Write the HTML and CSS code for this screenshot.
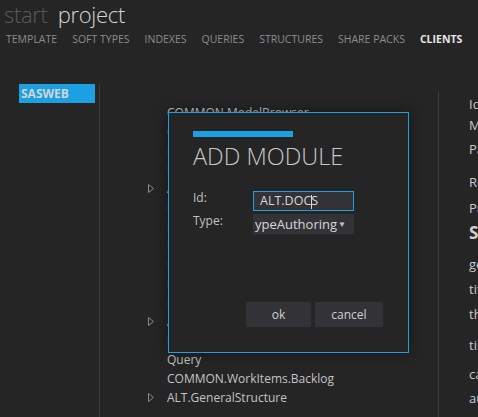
FILE: index.html
```html
<!DOCTYPE html>
<html lang="en">
<head>
  <meta charset="UTF-8">
  <title>project</title>
  <link rel="stylesheet" href="styles.css">
</head>
<body>
  <div class="title"><span class="start">start</span><span class="project">project</span></div>
  <div class="tabs">
    <span>TEMPLATE</span>
    <span>SOFT TYPES</span>
    <span>INDEXES</span>
    <span>QUERIES</span>
    <span>STRUCTURES</span>
    <span>SHARE PACKS</span>
    <span class="active">CLIENTS</span>
  </div>

  <div class="main">
    <div class="clients">
      <div class="client selected">SASWEB</div>
    </div>

    <div class="tree">
      <div class="row"><span class="arrow"></span>COMMON.ModelBrowser</div>
      <div class="row"><span class="arrow"></span>COMMON.Search</div>
      <div class="row"><span class="arrow"></span>Item</div>
      <div class="row"><span class="arrow"></span>Link</div>
      <div class="row"><span class="arrow"><svg width="6" height="9" viewBox="0 0 6 9"><polygon points="0.5,0.5 5.5,4.5 0.5,8.5" fill="none" stroke="#8a8a8a"/></svg></span>ALT.Documents</div>
      <div class="row"><span class="arrow"></span>Item</div>
      <div class="row"><span class="arrow"></span>Item</div>
      <div class="row"><span class="arrow"></span>Item</div>
      <div class="row"><span class="arrow"></span>Item</div>
      <div class="row"><span class="arrow"></span>Item</div>
      <div class="row"><span class="arrow"></span>Item</div>
      <div class="row"><span class="arrow"><svg width="6" height="9" viewBox="0 0 6 9"><polygon points="0.5,0.5 5.5,4.5 0.5,8.5" fill="none" stroke="#8a8a8a"/></svg></span>ALT.Workflow</div>
      <div class="row"><span class="arrow"></span>Item</div>
      <div class="row"><span class="arrow"></span>Query</div>
      <div class="row"><span class="arrow"></span>COMMON.WorkItems.Backlog</div>
      <div class="row"><span class="arrow"><svg width="6" height="9" viewBox="0 0 6 9"><polygon points="0.5,0.5 5.5,4.5 0.5,8.5" fill="none" stroke="#8a8a8a"/></svg></span>ALT.GeneralStructure</div>
    </div>

    <div class="props">
      <div class="prop">Id</div>
      <div class="prop">Module</div>
      <div class="prop gap">Path</div>
      <div class="prop gap2">Rename</div>
      <div class="prop gap3">Properties</div>
      <div class="heading">Settings</div>
      <div class="prop s1">general</div>
      <div class="prop s2">title</div>
      <div class="prop s2">theme</div>
      <div class="prop s3">timeout</div>
      <div class="prop s4">cache</div>
      <div class="prop s5">auth</div>
    </div>
  </div>

  <div class="dialog">
    <div class="bar"></div>
    <div class="dialog-title">ADD MODULE</div>
    <div class="form">
      <label>Id:</label>
      <div class="input">ALT.DOC<span class="caret"></span>S</div>
      <label>Type:</label>
      <div class="select"><span class="value">ypeAuthoring</span><span class="drop">&#9660;</span></div>
    </div>
    <div class="actions">
      <button class="ok">ok</button>
      <button class="cancel">cancel</button>
    </div>
  </div>
</body>
</html>
```

FILE: styles.css
```css
* {
  box-sizing: border-box;
}

body {
  margin: 0;
  width: 478px;
  height: 417px;
  overflow: hidden;
  background: #252526;
  color: #c8c8c8;
  font-family: 'Open Sans', 'Noto Sans', sans-serif;
  position: relative;
}

.title {
  height: 29px;
  padding-left: 4px;
  padding-top: 1px;
  font-size: 22px;
  line-height: 26px;
  font-weight: 300;
  letter-spacing: -0.3px;
  white-space: nowrap;
}

.start {
  color: #5a5a5a;
  margin-right: 10px;
}

.project {
  color: #d6d6d6;
}

.tabs {
  display: flex;
  gap: 15px;
  padding-left: 6px;
  font-size: 10.5px;
  line-height: 20px;
  color: #8c8c8c;
  white-space: nowrap;
}

.tabs .active {
  color: #e6e6e6;
  font-weight: bold;
}

.main {
  display: grid;
  grid-template-columns: 100px 338px 1fr;
  margin-top: 35px;
  height: 333px;
}

.clients {
  border-right: 1px solid #3c3c3c;
  padding-left: 19px;
}

.client {
  width: 76px;
  height: 19px;
  padding-left: 2px;
  font-size: 12px;
  line-height: 19px;
  font-weight: bold;
}

.client.selected {
  background: #1ba1e2;
  color: #d4d4d4;
}

.tree {
  padding-top: 19px;
  padding-left: 48px;
  font-size: 12px;
  white-space: nowrap;
  overflow: hidden;
}

.row {
  display: flex;
  align-items: center;
  height: 19px;
  line-height: 19px;
  color: #c4c4c4;
}

.arrow {
  width: 19px;
  display: flex;
  align-items: center;
}

.props {
  margin-top: 8px;
  border-left: 1px solid #3c3c3c;
  padding-left: 30px;
  padding-top: 2px;
  font-size: 13px;
  white-space: nowrap;
  overflow: hidden;
}

.prop {
  line-height: 20px;
  margin-bottom: 1px;
  color: #c8c8c8;
}

.prop.gap {
  margin-top: 4px;
}

.prop.gap2 {
  margin-top: 13px;
}

.prop.gap3 {
  margin-top: 6px;
}

.heading {
  margin-top: 4px;
  font-size: 17px;
  font-weight: bold;
  line-height: 22px;
  color: #d0d0d0;
}

.prop.s1 {
  margin-top: 10px;
}

.prop.s2 {
  margin-top: 5px;
}

.prop.s3 {
  margin-top: 11px;
}

.prop.s4 {
  margin-top: 9px;
}

.prop.s5 {
  margin-top: 4px;
}

.dialog {
  position: absolute;
  left: 168px;
  top: 112px;
  width: 241px;
  height: 241px;
  border: 1px solid #1ba1e2;
  background: #252526;
  box-shadow: 0 0 14px rgba(0, 0, 0, 0.45);
  padding: 18px 25px 25px 24px;
  display: flex;
  flex-direction: column;
}

.bar {
  width: 100px;
  height: 6px;
  background: #1ba1e2;
}

.dialog-title {
  margin-top: 4px;
  font-size: 23.5px;
  line-height: 30px;
  font-weight: 300;
  color: #c8c8c8;
  white-space: nowrap;
}

.form {
  display: grid;
  grid-template-columns: 60px 101px;
  grid-template-rows: 20px 20px;
  row-gap: 3px;
  margin-top: 20px;
  font-size: 12px;
}

.form label {
  line-height: 14px;
  color: #c0c0c0;
}

.input {
  height: 20px;
  border: 1px solid #1ba1e2;
  background: #333337;
  padding-left: 6px;
  font-size: 12.5px;
  line-height: 18px;
  color: #d8d8d8;
}

.caret {
  display: inline-block;
  width: 1px;
  height: 14px;
  background: #d8d8d8;
  vertical-align: middle;
  margin-right: -1px;
}

.select {
  display: flex;
  height: 20px;
  background: #333337;
  line-height: 20px;
  color: #d8d8d8;
  overflow: hidden;
}

.select .value {
  flex: 1;
  overflow: hidden;
  padding-left: 2px;
  font-size: 13px;
}

.select .drop {
  width: 16px;
  font-size: 8px;
  color: #c8c8c8;
}

.actions {
  margin-top: auto;
  display: flex;
  justify-content: flex-end;
  gap: 4px;
}

button {
  height: 25px;
  border: none;
  background: #333337;
  color: #d0d0d0;
  font-family: 'Open Sans', 'Noto Sans', sans-serif;
  font-size: 12px;
}

.ok {
  width: 65px;
}

.cancel {
  width: 68px;
}
```
